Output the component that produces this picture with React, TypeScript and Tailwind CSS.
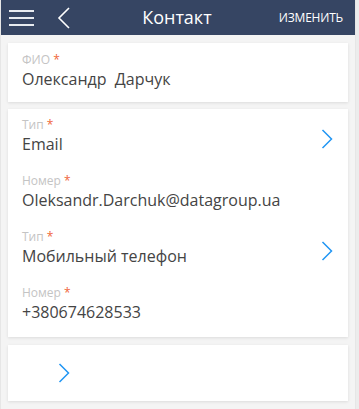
import { ReactNode } from "react";

const font = { fontFamily: '"Open Sans", "Noto Sans", Arial, sans-serif' };

function Chevron({ className = "" }: { className?: string }) {
  return (
    <svg width="12" height="20" viewBox="0 0 12 20" className={className}>
      <polyline points="1.5,1 10.5,10 1.5,19" fill="none" stroke="#2196f3" strokeWidth="1.5" />
    </svg>
  );
}

function Label({ children }: { children: ReactNode }) {
  return (
    <div className="text-[12px] leading-[16px] text-[#c4c4c4]">
      {children} <span className="text-[#f0653a]">*</span>
    </div>
  );
}

function Field({ label, value, link }: { label: string; value: string; link?: boolean }) {
  return (
    <div className="flex items-center">
      <div className="flex-1 min-w-0">
        <Label>{label}</Label>
        <div className="text-[16px] leading-[22px] text-[#444] whitespace-pre">{value}</div>
      </div>
      {link && <Chevron className="mt-[5px] mr-[15px]" />}
    </div>
  );
}

export default function App() {
  return (
    <div style={font} className="w-[359px] h-[409px] flex bg-[#ececec] overflow-hidden">
      <div className="w-[356px] h-full bg-[#f4f4f4] border-l border-r border-[#e6e6e6] flex flex-col">
        <header className="h-[35px] bg-[#364563] flex items-center text-white shrink-0">
          <button className="ml-[8px] w-[25px] flex flex-col gap-[5px]">
            <span className="h-[2px] bg-[#e8ebf0]" />
            <span className="h-[2px] bg-[#e8ebf0]" />
            <span className="h-[2px] bg-[#e8ebf0]" />
          </button>
          <svg width="14" height="22" viewBox="0 0 14 22" className="ml-[23px]">
            <polyline points="12,1 2,11 12,21" fill="none" stroke="#fff" strokeWidth="1.6" />
          </svg>
          <div className="flex-1 text-center text-[18px] leading-none pl-[4px] pb-[1px]">Контакт</div>
          <div className="text-[12px] mr-[12px] tracking-[-0.2px]">ИЗМЕНИТЬ</div>
        </header>

        <div className="flex flex-col gap-[7px] px-[7px] pt-[8px]">
          <div className="bg-white shadow-[0_1px_3px_rgba(0,0,0,0.1)] pl-[14px] pt-[9px] pb-[12px]">
            <Field label="ФИО" value="Олександр  Дарчук" />
          </div>

          <div className="bg-white shadow-[0_1px_3px_rgba(0,0,0,0.1)] pl-[14px] pt-[8px] pb-[14px] flex flex-col gap-[18px]">
            <Field label="Тип" value="Email" link />
            <Field label="Номер" value="Oleksandr.Darchuk@datagroup.ua" />
            <Field label="Тип" value="Мобильный телефон" link />
            <Field label="Номер" value="+380674628533" />
          </div>

          <div className="bg-white shadow-[0_1px_3px_rgba(0,0,0,0.1)] h-[56px] mt-[1px] flex items-center pl-[50px]">
            <Chevron />
          </div>
        </div>
      </div>
    </div>
  );
}
